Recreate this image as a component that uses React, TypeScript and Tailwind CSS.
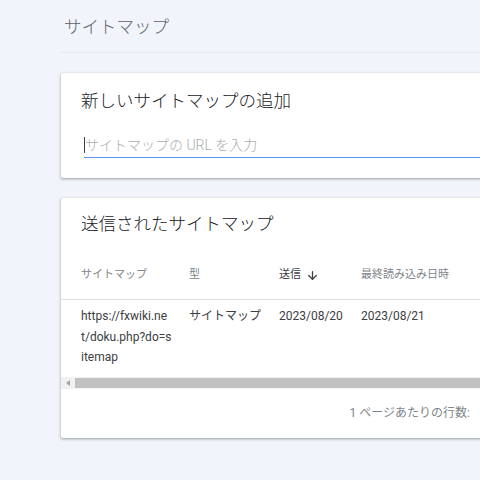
import { ArrowDown } from 'lucide-react';

const font = { fontFamily: 'Roboto, "Noto Sans CJK JP", sans-serif' };

const cardClass =
    'w-[480px] bg-white rounded-[2px] shadow-[0_1px_2px_rgba(60,64,67,0.3),0_1px_3px_1px_rgba(60,64,67,0.15)]';

const cols = 'grid grid-cols-[108px_90px_82px_1fr]';

export default function App() {
    return (
        <div className="w-[480px] h-[480px] overflow-hidden bg-[#f1f4fb]" style={font}>
            <div className="pl-[61px]">
                {/* page header */}
                <div className="w-[480px] pt-[15px] pb-[13px] border-b border-[#e3e6ec]">
                    <h1 className="pl-[3px] text-[17.5px] leading-[24px] font-light text-[#5f6368]">サイトマップ</h1>
                </div>

                {/* add sitemap */}
                <div className={`${cardClass} mt-[20px] h-[105px] pt-[16px] pl-[20px]`}>
                    <h2 className="text-[17.5px] leading-[24px] font-light text-[#202124]">新しいサイトマップの追加</h2>
                    <div className="mt-[21px] ml-[3px] border-b border-[#5b95f5] flex items-center h-[24px] pb-[1px]">
                        <span className="w-px h-[16px] bg-[#3c4043]" />
                        <span className="text-[14px] leading-[20px] font-light text-[#a8acb1]">サイトマップの URL を入力</span>
                    </div>
                </div>

                {/* submitted sitemaps */}
                <div className={`${cardClass} mt-[20px] h-[240px] pt-[14px]`}>
                    <h2 className="pl-[20px] text-[17.5px] leading-[24px] font-light text-[#202124]">送信されたサイトマップ</h2>

                    <div className={`${cols} mt-[15px] h-[49px] pl-[20px] items-center text-[11px] text-[#80868b] border-b border-[#e0e0e0]`}>
                        <span>サイトマップ</span>
                        <span>型</span>
                        <span className="flex items-center gap-[5px] text-[#3c4043]">
                            送信
                            <ArrowDown size={13} strokeWidth={2.4} />
                        </span>
                        <span>最終読み込み日時</span>
                    </div>

                    <div className={`${cols} h-[77px] pt-[6px] pl-[20px] items-start text-[12px] leading-[20.5px] text-[#3c4043]`}>
                        <span className="flex flex-col">
                            <span>https://fxwiki.ne</span>
                            <span>t/doku.php?do=s</span>
                            <span>itemap</span>
                        </span>
                        <span>サイトマップ</span>
                        <span>2023/08/20</span>
                        <span>2023/08/21</span>
                    </div>

                    {/* horizontal scrollbar */}
                    <div className="h-[12px] bg-[#f1f1f1] flex items-center">
                        <div className="w-[14px] flex items-center justify-center">
                            <svg width="4" height="6" viewBox="0 0 4 6">
                                <path d="M4 0 L0 3 L4 6 Z" fill="#a3a3a3" />
                            </svg>
                        </div>
                        <div className="flex-1 h-[10px] bg-[#c1c1c1]" />
                    </div>

                    <div className="h-[48px] flex items-center justify-end pr-[71px] text-[12px] text-[#80868b]">
                        1 ページあたりの行数:
                    </div>
                </div>
            </div>
        </div>
    );
}
